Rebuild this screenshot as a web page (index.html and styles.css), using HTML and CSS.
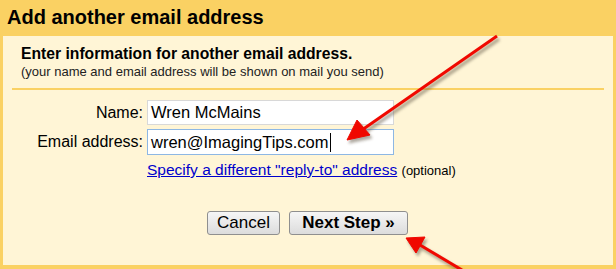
FILE: index.html
```html
<!DOCTYPE html>
<html lang="en">
<head>
    <meta charset="UTF-8">
    <title>Add another email address</title>
    <link rel="stylesheet" href="styles.css">
</head>
<body>
    <div class="dialog">
        <h1 class="title">Add another email address</h1>
        <div class="panel">
            <div class="intro">
                <h2>Enter information for another email address.</h2>
                <p>(your name and email address will be shown on mail you send)</p>
            </div>
            <form class="fields">
                <label for="name">Name:</label>
                <div class="text-box" id="name">Wren McMains</div>
                <label for="email">Email address:</label>
                <div class="text-box focused" id="email">wren@ImagingTips.com<i class="caret"></i></div>
                <span></span>
                <p class="reply"><a href="#">Specify a different "reply-to" address</a> <small>(optional)</small></p>
            </form>
            <div class="buttons">
                <button type="button" class="cancel">Cancel</button>
                <button type="button" class="next">Next Step &raquo;</button>
            </div>
        </div>
        <svg class="arrows" width="616" height="269" viewBox="0 0 616 269">
            <defs>
                <filter id="shade" x="-20%" y="-20%" width="140%" height="140%">
                    <feGaussianBlur stdDeviation="1.6"/>
                </filter>
            </defs>
            <g fill="#6b6150" stroke="#6b6150" opacity="0.55" filter="url(#shade)" transform="translate(2 3)">
                <line x1="497" y1="36" x2="362" y2="130" stroke-width="3.5"/>
                <polygon points="347,140 357,120 370,135"/>
                <line x1="462" y1="270" x2="420" y2="245" stroke-width="3.5"/>
                <polygon points="406,238 425,237 416,253"/>
            </g>
            <g fill="#f00800" stroke="#f00800">
                <line x1="497" y1="36" x2="362" y2="130" stroke-width="3"/>
                <polygon points="347,140 357,120 370,135"/>
                <line x1="462" y1="270" x2="420" y2="245" stroke-width="3"/>
                <polygon points="406,238 425,237 416,253"/>
            </g>
        </svg>
    </div>
</body>
</html>
```

FILE: styles.css
```css
* {
    box-sizing: border-box;
}
body {
    margin: 0;
    font-family: "Liberation Sans", Arial, sans-serif;
    color: #000;
}
.dialog {
    position: relative;
    width: 616px;
    height: 269px;
    background: #fad163;
    padding: 0 3px 4px 3px;
    display: flex;
    flex-direction: column;
}
.title {
    margin: 0;
    height: 36px;
    padding: 6px 0 0 4px;
    font-size: 20px;
    font-weight: bold;
}
.panel {
    flex: 1;
    background: #fff5d6;
}
.intro {
    margin: 0 9px;
    padding: 9px 9px 9px 9px;
    border-bottom: 2px solid #fad163;
}
.intro h2 {
    margin: 0;
    font-size: 15.7px;
    font-weight: bold;
}
.intro p {
    margin: 1px 0 0 0;
    font-size: 13px;
    color: #222;
}
.fields {
    display: grid;
    grid-template-columns: 140px 247px;
    column-gap: 4px;
    row-gap: 4px;
    align-items: center;
    margin-top: 10px;
}
.fields label {
    text-align: right;
    font-size: 16px;
}
.text-box {
    height: 25px;
    border: 1px solid #d8d8d8;
    background: #fff;
    font-size: 16.5px;
    padding: 0 3px;
    display: flex;
    align-items: center;
    white-space: nowrap;
}
.focused {
    height: 26px;
    border-color: #8db7e4;
}
.caret {
    display: inline-block;
    width: 1px;
    height: 19px;
    background: #000;
    margin-left: 1px;
}
.reply {
    margin: 2px 0 0 0;
    font-size: 15.5px;
    white-space: nowrap;
}
.reply a {
    color: #0000cc;
}
.reply small {
    font-size: 13px;
}
.buttons {
    display: flex;
    gap: 9px;
    margin: 32px 0 0 204px;
}
.buttons button {
    height: 24px;
    border: 1px solid #8f8f8f;
    border-radius: 3px;
    background: linear-gradient(#f6f6f6, #dcdcdc);
    font-family: "Liberation Sans", Arial, sans-serif;
    font-size: 17px;
    color: #000;
    padding: 0;
}
.cancel {
    width: 73px;
}
.next {
    width: 119px;
    font-weight: bold;
}
.arrows {
    position: absolute;
    left: 0;
    top: 0;
    pointer-events: none;
}
```
